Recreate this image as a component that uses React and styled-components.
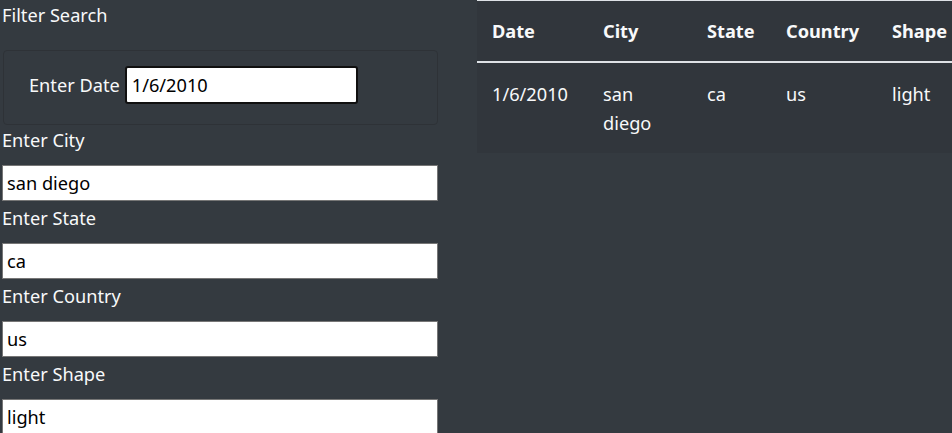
import React from "react";
import styled, { createGlobalStyle } from "styled-components";

const Global = createGlobalStyle`
  html, body { margin: 0; padding: 0; overflow: hidden; background: #343a40; }
  body { font-family: "Noto Sans", "Open Sans", sans-serif; color: #f8f9fa; }
  * { box-sizing: border-box; }
`;

const Page = styled.div`
  display: flex;
  align-items: flex-start;
  width: 952px;
  height: 433px;
  background: #343a40;
  font-size: 18.2px;
`;

const FilterCol = styled.div`
  width: 438px;
  flex: none;
  padding-left: 2px;
  display: flex;
  flex-direction: column;
`;

const Title = styled.div`
  line-height: 27px;
  margin-top: 2px;
`;

const DateBox = styled.div`
  margin-top: 21px;
  margin-left: 1px;
  height: 75px;
  border: 1px solid #2e3237;
  border-radius: 4px;
  display: flex;
  align-items: center;
  gap: 5px;
  padding-left: 25px;
  padding-bottom: 5px;
`;

const Label = styled.label`
  display: block;
  line-height: 27px;
  margin-top: ${(p) => p.$top || 0}px;
  margin-bottom: ${(p) => p.$bottom || 0}px;
`;

const TextInput = styled.input`
  font-family: inherit;
  font-size: 18.2px;
  color: #000;
  background: #fff;
  height: 36px;
  width: 436px;
  padding: 0 4px;
  border: 1px solid #767676;
  border-radius: 0;
  margin-bottom: 4px;
  outline: none;
`;

const DateInput = styled(TextInput)`
  width: 233px;
  height: 38px;
  margin: 0;
  border: 2px solid #101010;
  border-radius: 3px;
  box-shadow: inset 0 0 0 1px #fff;
  padding: 0 5px;
`;

const TableWrap = styled.div`
  margin-left: 39px;
  flex: none;
`;

const Table = styled.table`
  border-collapse: collapse;
  background: #31363c;
  table-layout: fixed;
  width: 490px;
  line-height: 29px;
`;

const Th = styled.th`
  text-align: left;
  font-weight: 700;
  padding: 16px 0 15px 15px;
  border-top: 1px solid #dee2e6;
  border-bottom: 2px solid #dee2e6;
  white-space: nowrap;
  width: ${(p) => p.$w}px;
`;

const Td = styled.td`
  vertical-align: top;
  padding: 17px 12px 15px 15px;
`;

const cols = [
  { name: "Date", w: 111 },
  { name: "City", w: 104 },
  { name: "State", w: 79 },
  { name: "Country", w: 106 },
  { name: "Shape", w: 90 },
];

const row = ["1/6/2010", "san diego", "ca", "us", "light"];

const fields = [
  { label: "Enter City", value: "san diego" },
  { label: "Enter State", value: "ca" },
  { label: "Enter Country", value: "us" },
  { label: "Enter Shape", value: "light" },
];

export default function App() {
  return (
    <>
      <Global />
      <Page>
        <FilterCol>
          <Title>Filter Search</Title>
          <DateBox>
            <Label>Enter Date</Label>
            <DateInput defaultValue="1/6/2010" />
          </DateBox>
          {fields.map((f, i) => (
            <React.Fragment key={f.label}>
              <Label $top={i === 0 ? 2 : 0} $bottom={11}>
                {f.label}
              </Label>
              <TextInput defaultValue={f.value} />
            </React.Fragment>
          ))}
        </FilterCol>
        <TableWrap>
          <Table>
            <thead>
              <tr>
                {cols.map((c) => (
                  <Th key={c.name} $w={c.w}>
                    {c.name}
                  </Th>
                ))}
              </tr>
            </thead>
            <tbody>
              <tr>
                {row.map((v, i) => (
                  <Td key={i}>{v}</Td>
                ))}
              </tr>
            </tbody>
          </Table>
        </TableWrap>
      </Page>
    </>
  );
}
